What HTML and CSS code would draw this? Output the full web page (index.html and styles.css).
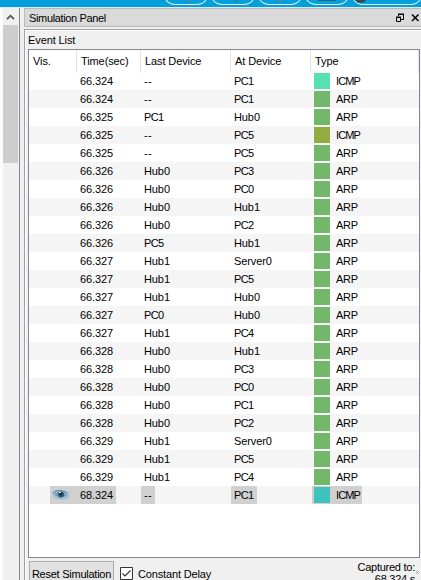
FILE: index.html
```html
<!DOCTYPE html>
<html lang="en">
<head>
<meta charset="utf-8">
<title>Simulation Panel</title>
<link rel="stylesheet" href="styles.css">
</head>
<body>
<div class="toolbar">
  <svg width="421" height="8" viewBox="0 0 421 8" fill="none">
    <g stroke="#e8f8ff" stroke-width="1.1">
      <path d="M166 0Q169 4.5 176 4.5H196Q203 4.5 206 0"/>
      <path d="M213 0Q216 4.5 223 4.5H243Q250 4.5 253 0"/>
      <path d="M260 0Q263 4.5 270 4.5H290Q297 4.5 300 0"/>
      <path d="M307 0Q310 4.5 317 4.5H337Q344 4.5 347 0"/>
      <path d="M354 0Q357 4.5 364 4.5H410Q417 4.5 420 0"/>
    </g>
    <path d="M188 0h5l-2 1h-2zM278 0h5l-2 2h-1z" fill="#77858b"/>
    <path d="M235 0h1v1h2v1h-2v-1z" fill="#6c5b50"/>
    <path d="M318 0h18v1h-18z" fill="#28627b"/>
    <path d="M355 0h11q-2 3-5.500 3t-5.500-3" fill="#354b57"/>
  </svg>
</div>
<main class="window">
  <aside class="scrollbar">
    <svg class="scroll-up" width="15" height="17" viewBox="0 0 15 17"><path d="M4 11.200L7.500 7.700L11 11.200" fill="none" stroke="#555" stroke-width="1.800"/></svg>
    <div class="thumb"></div>
  </aside>
  <section class="dock">
    <header class="titlebar">
      <span>Simulation Panel</span>
      <svg width="27" height="12" viewBox="0 0 27 12" fill="none" stroke="#000">
        <path d="M4.500 4V2.500H9.500V7.500H7M4 2H10" />
        <path d="M2.500 5.500H6.500V9.500H2.500zM2 5H7"/>
        <path d="M18 2.500L24.500 9M24.500 2.500L18 9" stroke-width="1.500"/>
      </svg>
    </header>
    <div class="panel">
      <h1 class="caption">Event List</h1>
      <div class="list" id="list">
        <div class="grid head">
          <span>Vis.</span><span>Time(sec)</span><span>Last Device</span><span>At Device</span><span>Type</span>
        </div>
      </div>
      <footer class="controls">
        <button class="reset">Reset Simulation</button>
        <label class="delay"><svg width="13" height="13" viewBox="0 0 13 13" fill="none"><path d="M.5.5h12v12H.5z" fill="#fff" stroke="#333"/><path d="M2.500 6.500L5 9L10.500 3.500" stroke="#333" stroke-width="1.200"/></svg><span>Constant Delay</span></label>
        <div class="captured">Captured to:<br><span>68.324 s</span></div>
        <svg class="grip" width="4" height="4" viewBox="0 0 4 4"><path d="M0 0h1v1H0zM2 0h1v1H2zM1 1h1v1H1zM0 2h1v1H0zM2 2h1v1H2z" fill="#aaa"/></svg>
      </footer>
    </div>
  </section>
</main>
<script src="events.js"></script>
</body>
</html>
```
FILE: styles.css
```css
* { box-sizing: border-box; }
body {
  margin: 0;
  width: 421px;
  height: 580px;
  overflow: hidden;
  display: flex;
  flex-direction: column;
  background: #f0f0f0;
  color: #000;
  font: 11px/18px "Liberation Sans", Arial, sans-serif;
}
svg { display: block; flex: none; }
.toolbar { height: 8px; flex: none; background: linear-gradient(#059fdb 7px, #d7edf6 7px); }
.window { display: flex; height: 572px; }
.scrollbar {
  width: 20px;
  padding-left: 3px;
  border-right: 1px solid #87878c;
  background: linear-gradient(90deg, #fcfcfc 3px, #f0f0f0 3px);
  flex: none;
}
.thumb { width: 15px; height: 138px; background: #cdcdcd; }
.dock { flex: 1; min-width: 0; padding-left: 4px; }
.titlebar {
  height: 19px;
  display: flex;
  justify-content: space-between;
  align-items: center;
  padding: 1px 0 0 4px;
  border: 1px solid #b9b9b9;
  border-right: 0;
  background: #dadada;
  letter-spacing: -0.35px;
}
.panel {
  height: 551px;
  margin-top: 2px;
  padding-left: 3px;
  border-top: 1px solid #a0a0a0;
  border-left: 1px solid #a0a0a0;
  box-shadow: inset 1px 1px #fff;
}
.caption { margin: 0; height: 19px; padding-top: 1px; font: inherit; letter-spacing: -0.1px; }
.list { width: 392px; height: 509px; border: 1px solid #828790; background: #fff; }
.grid { display: grid; grid-template-columns: 48px 64px 90px 80px 108px; }
.head { height: 22px; line-height: 23px; letter-spacing: -0.1px; }
.head span { padding-left: 4px; border-right: 1px solid #e5e5e5; }
.row { height: 18px; line-height: 19px; }
.row:nth-child(odd) { background: #f5f5f5; }
.cell { display: flex; justify-self: start; height: 18px; padding: 0 3px; letter-spacing: -0.1px; }
.pc { letter-spacing: -0.7px; padding-right: 4px; }
.none { letter-spacing: 0.4px; }
.type { gap: 6px; margin-left: 1px; padding: 0 2px; letter-spacing: -0.3px; }
.icmp { letter-spacing: -0.9px; }
.eye { width: 27px; justify-self: end; padding: 3px 0 0 2px; }
.selected .cell { background: #d0d0d0; }
.swatch { width: 16px; height: 16px; margin-top: 1px; }
.arp { background: #73b76b; }
.mint { background: #55e1b1; }
.olive { background: #92ac40; }
.teal { background: #3dc2bd; }
.controls { display: flex; height: 22px; padding: 3px 0 0 1px; }
.reset {
  width: 85px;
  height: 26px;
  padding: 0;
  border: 1px solid #adadad;
  background: #e1e1e1;
  color: #000;
  font: inherit;
  letter-spacing: -0.25px;
  flex: none;
  white-space: nowrap;
}
.delay { display: flex; gap: 5px; margin: 6px 0 0 6px; letter-spacing: -0.15px; }
.delay span { line-height: 15px; }
.captured { margin: 0 0 0 auto; line-height: 12px; text-align: right; white-space: nowrap; letter-spacing: -0.25px; }
.captured span { display: inline-block; }
.grip { margin: 10px 1px 0; }
```
FILE: events.js
```js
const events = `66.324|--|PC1|mint
66.324|--|PC1|arp
66.325|PC1|Hub0|arp
66.325|--|PC5|olive
66.325|--|PC5|arp
66.326|Hub0|PC3|arp
66.326|Hub0|PC0|arp
66.326|Hub0|Hub1|arp
66.326|Hub0|PC2|arp
66.326|PC5|Hub1|arp
66.327|Hub1|Server0|arp
66.327|Hub1|PC5|arp
66.327|Hub1|Hub0|arp
66.327|PC0|Hub0|arp
66.327|Hub1|PC4|arp
66.328|Hub0|Hub1|arp
66.328|Hub0|PC3|arp
66.328|Hub0|PC0|arp
66.328|Hub0|PC1|arp
66.328|Hub0|PC2|arp
66.329|Hub1|Server0|arp
66.329|Hub1|PC5|arp
66.329|Hub1|PC4|arp
68.324|--|PC1|teal`.split("\n").map(line => line.split("|"));

const eye = `<svg width="18" height="12" viewBox="0 0 18 12"><path d="M0 4Q3 0 9 1Q15 1 17 5V9Q11 12 6 10Q1 9 0 4" fill="#9bbfd6"/><path d="M1 4Q6-1 15 4" fill="none" stroke="#6e98b4" stroke-width="1.500"/><path d="M2 5Q8 1 15 6Q8 11 2 5" fill="#7199b3"/><circle cx="9" cy="5.500" r="3" fill="#35566e"/><circle cx="9" cy="5" r="1.500" fill="#152c3c"/><path d="M7 3h2v1H7z" fill="#d9eaf3"/></svg>`;

const deviceClass = name => name === "--" ? " none" : name.startsWith("PC") ? " pc" : "";

document.getElementById("list").insertAdjacentHTML("beforeend", events.map(([time, last, at, kind]) => {
  const selected = kind === "teal";
  const icmp = kind !== "arp";
  return `<div class="grid row${selected ? " selected" : ""}">
    <span class="cell eye">${selected ? eye : ""}</span>
    <span class="cell">${time}</span>
    <span class="cell${deviceClass(last)}">${last}</span>
    <span class="cell${deviceClass(at)}">${at}</span>
    <span class="cell type${icmp ? " icmp" : ""}"><i class="swatch ${kind}"></i>${icmp ? "ICMP" : "ARP"}</span>
  </div>`;
}).join(""));
```
